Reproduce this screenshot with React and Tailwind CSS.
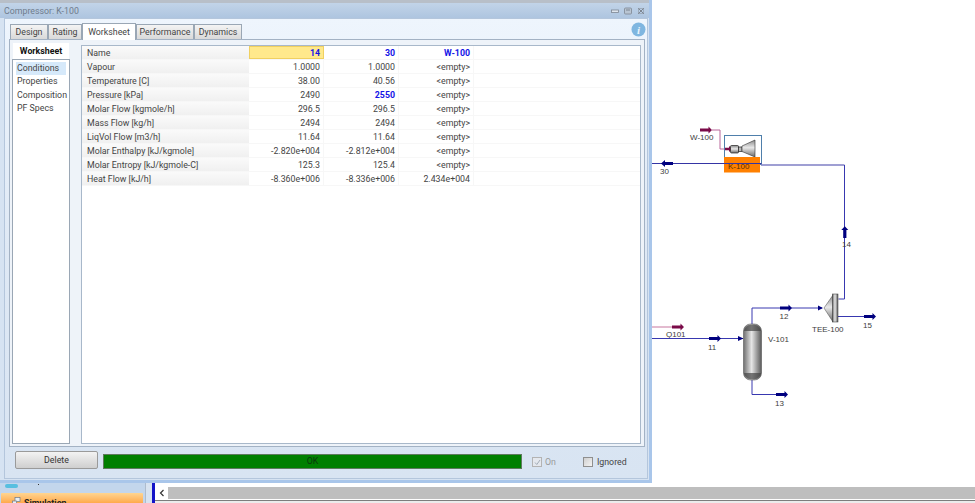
import React from 'react';

const rows = [
    { label: 'Vapour', a: '1.0000', b: '1.0000', c: '<empty>' },
    { label: 'Temperature [C]', a: '38.00', b: '40.56', c: '<empty>' },
    { label: 'Pressure [kPa]', a: '2490', b: '2550', c: '<empty>', bBlue: true },
    { label: 'Molar Flow [kgmole/h]', a: '296.5', b: '296.5', c: '<empty>' },
    { label: 'Mass Flow [kg/h]', a: '2494', b: '2494', c: '<empty>' },
    { label: 'LiqVol Flow [m3/h]', a: '11.64', b: '11.64', c: '<empty>' },
    { label: 'Molar Enthalpy [kJ/kgmole]', a: '-2.820e+004', b: '-2.812e+004', c: '<empty>' },
    { label: 'Molar Entropy [kJ/kgmole-C]', a: '125.3', b: '125.4', c: '<empty>' },
    { label: 'Heat Flow [kJ/h]', a: '-8.360e+006', b: '-8.336e+006', c: '2.434e+004' },
];

const tabs = ['Design', 'Rating', 'Worksheet', 'Performance', 'Dynamics'];
const tabWidths = { Design: 'w-[38px]', Rating: 'w-[34px]', Worksheet: 'w-[54px]', Performance: 'w-[58px]', Dynamics: 'w-[48px]' };
const navItems = ['Conditions', 'Properties', 'Composition', 'PF Specs'];

const StreamArrow = ({ x, y, color = '#00007f' }) => (
    <path d={`M${x} ${y - 1.6}h8.5v-1.900l3.500 3.500-3.500 3.500v-1.900h-8.500z`} fill={color} />
);

const Flowsheet = () => (
    <svg viewBox="652 0 323 483" className="w-[323px] h-[483px] shrink-0" fontFamily="'Liberation Sans', sans-serif" fontSize="8" fill="#3d3d3d">
        <defs>
            <linearGradient id="vessel" x1="0" x2="1" y1="0" y2="0">
                <stop offset="0" stopColor="#6f6f6f" />
                <stop offset="0.45" stopColor="#e6e6e6" />
                <stop offset="1" stopColor="#5a5a5a" />
            </linearGradient>
            <linearGradient id="cone" x1="0" x2="0" y1="0" y2="1">
                <stop offset="0" stopColor="#8a8a8a" />
                <stop offset="0.45" stopColor="#e8e8e8" />
                <stop offset="1" stopColor="#6a6a6a" />
            </linearGradient>
        </defs>

        {/* compressor */}
        <path d="M712 130h8v19h10" fill="none" stroke="#b8669a" strokeWidth="1" />
        <StreamArrow x={700} y={130} color="#7a0a48" />
        <rect x="724.500" y="135.500" width="37" height="29" fill="#fff" stroke="#4f7fab" />
        <path d="M725 147.800h4v-1.800l3.500 3-3.500 3v-1.800h-4z" fill="#7a0a48" />
        <rect x="730.500" y="145.500" width="8" height="7.500" rx="1" fill="url(#cone)" stroke="#222" strokeWidth="0.700" />
        <rect x="738.500" y="147" width="3.500" height="4.500" fill="#bbb" stroke="#222" strokeWidth="0.700" />
        <path d="M742 146l13-6v17l-13-5.500z" fill="url(#cone)" stroke="#333" strokeWidth="0.600" />
        <rect x="724" y="157" width="36" height="15.500" fill="#ff8000" />
        <text x="728" y="169" fill="#5a3000" fontSize="8">K-100</text>
        <text x="690" y="140" fontSize="8">W-100</text>

        {/* 30 / 14 */}
        <path d="M652 163.500h109.500" stroke="#3535a5" strokeWidth="1" />
        <path d="M761 165h83.500" stroke="#7f7fc4" strokeWidth="1.500" />
        <path d="M844.500 165v134h-6" fill="none" stroke="#3838b0" strokeWidth="1" />
        <path d="M661 163.500l4-3.500v1.900h8v3.200h-8v1.900z" fill="#00007f" />
        <text x="660" y="174">30</text>
        <path d="M843.200 238v-8h-1.900l3.500-3.800 3.500 3.800h-1.900v8z" fill="#00007f" />
        <text x="842" y="247">14</text>

        {/* tee */}
        <path d="M752 325v-17h70" fill="none" stroke="#3838b0" strokeWidth="1" />
        <StreamArrow x={780} y={308} />
        <path d="M818 305.500l5 2.500-5 2.500z" fill="#00007f" />
        <text x="779.500" y="318.500">12</text>
        <path d="M838 316.500h28" stroke="#3838b0" strokeWidth="1" />
        <StreamArrow x={864} y={316.500} />
        <text x="863" y="327.500">15</text>
        <path d="M824 308l9-13v27z" fill="url(#cone)" stroke="#444" strokeWidth="0.500" />
        <rect x="832.500" y="294" width="5.500" height="28" fill="url(#vessel)" stroke="#333" strokeWidth="0.500" />
        <text x="812" y="332">TEE-100</text>

        {/* heat stream and feed */}
        <path d="M652 327h22" stroke="#c7779f" strokeWidth="1" />
        <StreamArrow x={672} y={327} color="#7a0a48" />
        <text x="666" y="337">Q101</text>
        <path d="M652 338.500h91" stroke="#3838b0" strokeWidth="1" />
        <StreamArrow x={709} y={338.500} />
        <path d="M738 336l5.500 2.500-5.500 2.500z" fill="#00007f" />
        <text x="708" y="349.500">11</text>

        {/* separator */}
        <path d="M752 380v14.500h26" fill="none" stroke="#3838b0" strokeWidth="1" />
        <StreamArrow x={776} y={394.500} />
        <text x="775" y="405.500">13</text>
        <rect x="743.500" y="324" width="18" height="56" rx="7" fill="url(#vessel)" stroke="#444" strokeWidth="0.500" />
        <path d="M744 331c1-4.500 4-6.500 8.500-6.500s7.500 2 8.500 6.500z" fill="#444" opacity="0.700" />
        <path d="M744 373c1 4.500 4 6.500 8.500 6.500s7.500-2 8.500-6.500z" fill="#444" opacity="0.700" />
        <text x="768" y="342">V-101</text>
    </svg>
);

const DataCell = ({ children, blue }) => (
    <div className={`w-[75px] pr-[3px] text-right border-r border-[#f7f7f7] ${blue ? 'font-bold text-[#1414e6]' : 'text-[#444]'}`}>
        {children}
    </div>
);

const App = () => {
    return (
        <div className="w-[975px] h-[503px] bg-white flex flex-col overflow-hidden font-['Roboto',sans-serif] text-[8.800px] leading-[14px] text-[#444]">
            <div className="flex h-[483px]">
                {/* Window */}
                <div className="w-[652px] h-[483px] shrink-0 flex flex-col bg-[#d6e3f2] border-r-[3px] border-b-[3px] border-[#a9c6ea]">
                    {/* Title bar */}
                    <div className="h-[18px] shrink-0 flex items-center justify-between pl-[4px] pr-[4px] border-t-[3px] border-[#b8bfc8] bg-gradient-to-b from-[#c2d4e8] to-[#aec5e0] text-[#6f7c8c]">
                        <span>Compressor: K-100</span>
                        <div className="flex items-center gap-[5px]">
                            <svg width="8" height="8" viewBox="0 0 8 8"><rect x="0.500" y="3" width="7" height="2.500" fill="#dfe6ee" stroke="#7d8692" strokeWidth="0.800" /></svg>
                            <svg width="8" height="8" viewBox="0 0 8 8"><rect x="0.500" y="1" width="7" height="6" rx="1" fill="#b9c5d3" stroke="#7d8692" strokeWidth="0.800" /><path d="M2 3h4" stroke="#7d8692" /></svg>
                            <svg width="8" height="8" viewBox="0 0 8 8"><path d="M1 1l6 6M7 1l-6 6" stroke="#7d8692" strokeWidth="1" /><rect x="1.500" y="1.500" width="5" height="5" fill="none" stroke="#8d96a2" strokeWidth="0.600" /></svg>
                        </div>
                    </div>

                    {/* Body */}
                    <div className="flex-1 flex flex-col ml-[4px] mr-px mb-px border border-[#b4c6dc] bg-gradient-to-b from-[#eef5fd] via-[#dfe9f5] to-[#d8e4f2]">
                        {/* Tabs */}
                        <div className="h-[20px] shrink-0 flex items-end pl-[5px] relative">
                            {tabs.map((tab) => (
                                <div
                                    key={tab}
                                    className={`${tabWidths[tab]} flex items-center justify-center border border-[#9aa7b5] border-b-0 ${tab === 'Worksheet' ? 'h-[17px] bg-white relative z-10 -mb-px' : 'h-[15px] bg-gradient-to-b from-[#f4f4f4] to-[#d9d9d9]'}`}
                                >
                                    {tab}
                                </div>
                            ))}
                            <svg width="15" height="15" viewBox="0 0 15 15" className="absolute right-px top-[3px]">
                                <circle cx="7.500" cy="7.500" r="7" fill="#7fb6e0" />
                                <text x="7.500" y="11.500" textAnchor="middle" fontFamily="'Liberation Serif', serif" fontStyle="italic" fontWeight="bold" fontSize="11" fill="#eaf4fb">i</text>
                            </svg>
                        </div>

                        {/* Tab page */}
                        <div className="h-[408px] shrink-0 flex ml-[4px] mr-[2px] pl-[2px] pr-[3px] pt-[5px] pb-[2px] gap-[11px] bg-[#eef3f9] border border-[#a3b2c4]">
                            {/* Left nav */}
                            <div className="w-[58px] shrink-0 flex flex-col -mt-[2px]">
                                <div className="h-[16px] shrink-0 mx-px bg-white font-bold text-center text-[#111] leading-[16px]">Worksheet</div>
                                <div className="flex-1 bg-white border border-[#9aa7b5] pt-[2px] px-[3px]">
                                    {navItems.map((item, i) => (
                                        <div key={item} className={`h-[13.400px] leading-[13.400px] pl-px whitespace-nowrap ${i === 0 ? 'bg-[#d6e9fa]' : ''}`}>
                                            {item}
                                        </div>
                                    ))}
                                </div>
                            </div>

                            {/* Table */}
                            <div className="flex-1 bg-white border border-[#a8b8ca] leading-[15px]">
                                <div className="flex h-[14px] border-b border-[#f7f7f7]">
                                    <div className="w-[167px] pl-[5px] bg-gradient-to-b from-[#fafafa] to-[#f0f0f0]">Name</div>
                                    <div className="w-[75px] pr-[3px] text-right font-bold text-[#1414e6] bg-[#ffe98c] border border-[#f0d060] leading-[13px]">14</div>
                                    <DataCell blue>30</DataCell>
                                    <DataCell blue>W-100</DataCell>
                                </div>
                                {rows.map((row) => (
                                    <div key={row.label} className="flex h-[14px] border-b border-[#f7f7f7]">
                                        <div className="w-[167px] pl-[5px] bg-gradient-to-b from-[#fafafa] to-[#f0f0f0] whitespace-nowrap">{row.label}</div>
                                        <DataCell>{row.a}</DataCell>
                                        <DataCell blue={row.bBlue}>{row.b}</DataCell>
                                        <DataCell>{row.c}</DataCell>
                                    </div>
                                ))}
                            </div>
                        </div>

                        {/* Footer */}
                        <div className="flex-1 flex items-start pl-[10px] pt-[4px]">
                            <button className="w-[83px] h-[18px] shrink-0 rounded-[2px] border border-[#9a9a9a] bg-gradient-to-b from-[#f3f3f3] to-[#cfcfcf] text-[#333]">Delete</button>
                            <div className="w-[419px] h-[15px] shrink-0 ml-[5px] mt-[3px] bg-[#008000] border border-[#5f7a5f] text-center leading-[13px] text-[#0c3a0c]">OK</div>
                            <label className="flex items-center ml-[10px] mt-[4px] text-[#9a9a9a]">
                                <span className="w-[10px] h-[10px] flex items-center justify-center border border-[#b3b3b3] bg-[#e4e8ee]">
                                    <svg width="7" height="7" viewBox="0 0 7 7"><path d="M1 3.500l1.800 2L6 1" fill="none" stroke="#a3adb8" /></svg>
                                </span>
                                <span className="ml-[3px]">On</span>
                            </label>
                            <label className="flex items-center ml-[27px] mt-[4px] text-[#444]">
                                <span className="w-[10px] h-[10px] border border-[#8f8f8f] bg-gradient-to-br from-[#d0d0d0] to-[#f4f4f4]"></span>
                                <span className="ml-[4px]">Ignored</span>
                            </label>
                        </div>
                    </div>
                </div>

                <Flowsheet />
            </div>

            {/* Bottom strip */}
            <div className="h-[20px] flex">
                <div className="w-[145px] shrink-0 flex flex-col bg-[#c3d6ec]">
                    <div className="h-[10px] shrink-0 flex items-start pl-[5px] gap-[20px]">
                        <div className="w-[13px] h-[4px] mt-px rounded-full bg-[#58bfe0]"></div>
                        <div className="w-px h-px mt-px bg-[#333]"></div>
                    </div>
                    <div className="flex-1 ml-px mr-[2px] flex items-start pl-[11px] gap-[3px] overflow-hidden rounded-t-[1px] bg-gradient-to-b from-[#ffd590] to-[#ffa94a]">
                        <svg width="9" height="9" viewBox="0 0 9 9" className="shrink-0 mt-[4px]"><rect x="3" y="0.500" width="5" height="4" fill="#e9eff6" stroke="#6c7a8a" strokeWidth="0.700" /><rect x="0.500" y="4" width="4" height="3" fill="#e9eff6" stroke="#6c7a8a" strokeWidth="0.700" /></svg>
                        <span className="font-bold text-[#222] leading-[20px]">Simulation</span>
                    </div>
                </div>
                <div className="w-[7px] shrink-0 bg-[#d8e3f0] border-l border-[#aebccd]"></div>
                <div className="w-[3px] shrink-0 bg-[#1414c8]"></div>
                <div className="flex-1 flex flex-col">
                    <div className="h-[4px] shrink-0 bg-white"></div>
                    <div className="h-[12px] shrink-0 flex">
                        <div className="w-[13px] flex items-center justify-center bg-white">
                            <svg width="6" height="8" viewBox="0 0 6 8"><path d="M4.500 1L1.500 4l3 3" fill="none" stroke="#333" strokeWidth="1.200" /></svg>
                        </div>
                        <div className="flex-1 bg-[#bebebe]"></div>
                    </div>
                    <div className="h-px shrink-0 bg-white"></div>
                    <div className="h-px shrink-0 bg-[#7d7d7d]"></div>
                    <div className="flex-1 bg-[#ececec]"></div>
                </div>
            </div>
        </div>
    );
};

export default App;
